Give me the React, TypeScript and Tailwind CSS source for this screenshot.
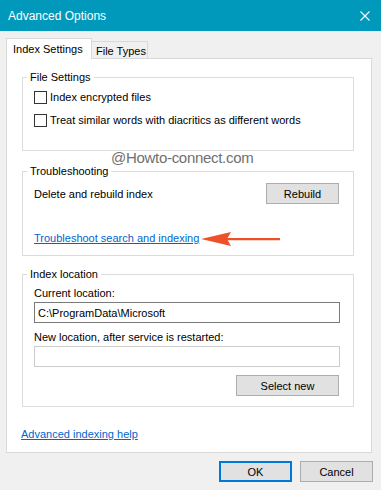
export default function App() {
  return (
    <div className="relative w-[381px] h-[490px] overflow-hidden bg-[#f0f0f0] font-['Liberation_Sans',Arial,sans-serif] text-[11px] leading-[16px] text-black">
      {/* Title bar */}
      <div className="flex h-[31px] items-center justify-between bg-[#0099bc] pl-[8px] pr-[11px] text-white">
        <span className="text-[12px]">Advanced Options</span>
        <svg width="10" height="10" viewBox="0 0 10 10" className="block">
          <path d="M0.5 0.5 L9.5 9.5 M9.5 0.5 L0.5 9.5" stroke="#ffffff" strokeWidth="1.1" fill="none" />
        </svg>
      </div>

      {/* Tabs */}
      <div className="ml-[6px] mt-[7px] flex h-[20px] items-end">
        <div className="relative z-10 -mb-px flex h-[21px] w-[86px] items-start border-l border-r border-t border-[#d9d9d9] bg-white pl-[6px] pt-[2px]">
          Index Settings
        </div>
        <div className="flex h-[17px] w-[56px] items-start border-r border-t border-[#d9d9d9] bg-[#f0f0f0] pl-[4px] pt-px">
          File Types
        </div>
      </div>

      {/* Panel */}
      <div className="ml-[6px] flex h-[395px] w-[366px] flex-col border border-[#d9d9d9] bg-white pl-[15px] pt-[10px]">
        {/* File Settings */}
        <fieldset className="h-[82px] w-[332px] border border-[#dcdcdc] pl-[11px] pr-[13px] pt-[4px]">
          <legend className="-ml-[7px] px-[3px]">File Settings</legend>
          <label className="flex h-[16px] items-center gap-[3px]">
            <span className="block h-[13px] w-[13px] border border-[#333333] bg-white" />
            Index encrypted files
          </label>
          <label className="mt-[7px] flex h-[16px] items-center gap-[3px]">
            <span className="block h-[13px] w-[13px] border border-[#333333] bg-white" />
            Treat similar words with diacritics as different words
          </label>
        </fieldset>

        {/* Troubleshooting */}
        <fieldset className="mt-[12px] h-[93px] w-[332px] border border-[#dcdcdc] pl-[11px] pr-[14px] pt-[4px]">
          <legend className="-ml-[7px] px-[3px]">Troubleshooting</legend>
          <div className="flex h-[21px] items-center justify-between">
            <span>Delete and rebuild index</span>
            <button className="h-[21px] w-[73px] border border-[#adadad] bg-[#e1e1e1] text-center">Rebuild</button>
          </div>
          <div className="mt-[26px]">
            <span className="text-[#0066cc] underline">Troubleshoot search and indexing</span>
          </div>
        </fieldset>

        {/* Index location */}
        <fieldset className="mt-[10px] h-[141px] w-[332px] border border-[#dcdcdc] pl-[11px] pr-[13px] pt-[3px]">
          <legend className="-ml-[7px] px-[3px]">Index location</legend>
          <div>Current location:</div>
          <div className="mt-px flex h-[21px] w-[306px] items-center border border-[#7a7a7a] bg-white pl-[3px]">
            C:\ProgramData\Microsoft
          </div>
          <div className="mt-[6px]">New location, after service is restarted:</div>
          <div className="mt-px h-[21px] w-[306px] border border-[#cccccc] bg-white" />
          <div className="mt-[8px] flex w-[305px] justify-end">
            <button className="h-[21px] w-[103px] border border-[#adadad] bg-[#e1e1e1] text-center">Select new</button>
          </div>
        </fieldset>

        <div className="-ml-px mt-[19px]">
          <span className="text-[#0066cc] underline">Advanced indexing help</span>
        </div>
      </div>

      {/* Bottom buttons */}
      <div className="mt-[8px] flex justify-end gap-[8px] pr-[8px]">
        <button className="h-[21px] w-[73px] border-2 border-[#0078d7] bg-[#e1e1e1] text-center">OK</button>
        <button className="h-[21px] w-[73px] border border-[#adadad] bg-[#e1e1e1] text-center">Cancel</button>
      </div>

      {/* Watermark */}
      <div className="absolute left-[111px] top-[149px] text-[15px] leading-[18px] tracking-[-0.3px] text-[#707070]">
        @Howto-connect.com
      </div>

      {/* Arrow */}
      <svg className="absolute left-[200px] top-[230px]" width="82" height="18" viewBox="0 0 82 18">
        <path d="M1 9 L31 2 L27 9 L31 16 Z" fill="#ee5029" />
        <path d="M27 8 H80 V10.2 H27 Z" fill="#ee5029" />
      </svg>
    </div>
  );
}
